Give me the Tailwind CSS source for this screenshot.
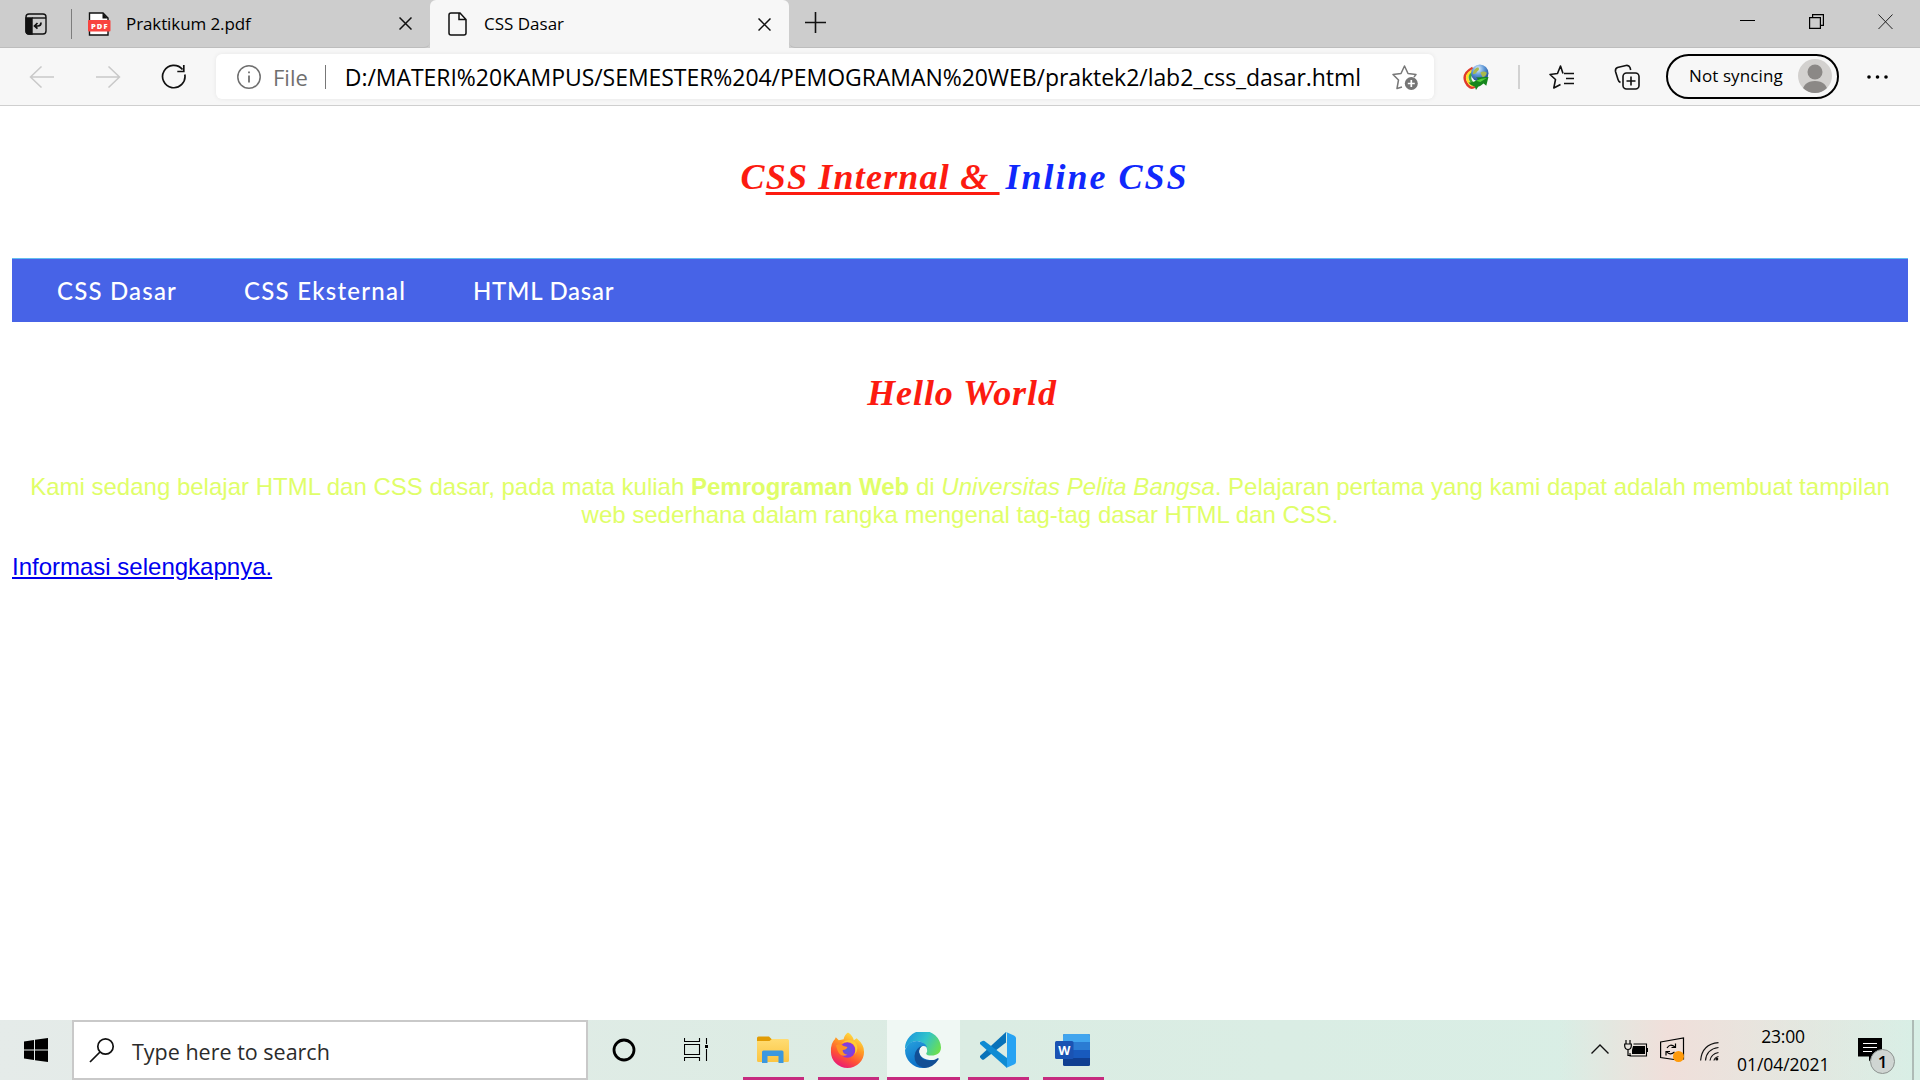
<!DOCTYPE html>
<html lang="id">
<head>
<meta charset="utf-8">
<title>CSS Dasar</title>
<script src="https://cdn.jsdelivr.net/npm/@tailwindcss/browser@4"></script>
</head>
<body class="flex h-[1080px] w-[1920px] flex-col overflow-hidden bg-white font-['Open_Sans',sans-serif] text-black">

<!-- Tab strip -->
<header class="flex h-12 shrink-0 bg-[#cdcdcd]">
  <div class="flex w-[430px] items-center rounded-br-md border-b border-[#bdbdbd]">
    <svg class="ml-[25px] size-[22px] shrink-0" viewBox="0 0 22 22" fill="none" stroke="#111" stroke-width="1.4">
      <rect x="1" y="1" width="20" height="20" rx="3"/>
      <path d="M1 5H7V21H4a3 3 0 0 1-3-3z" fill="#111"/><path d="M7 5H21"/>
      <path d="M16 9.500q0 3.500-3 3.500H9.500M12.500 10 9.500 13l3 2.700" stroke-width="1.7"/>
    </svg>
    <span class="ml-[24px] h-[30px] w-px bg-[#7d7d7d]"></span>
    <svg class="ml-[15px] h-6 w-6 shrink-0" viewBox="0 0 24 24">
      <path d="M2.500 1H16l5 5V23H2.500z" fill="#fff" stroke="#111" stroke-width="1.4"/>
      <path d="M15.500 1V6.500H21z" fill="#111"/>
      <rect x="1" y="8" width="22.500" height="11.500" rx="1" fill="#f8433f"/>
      <text x="12.200" y="16.600" font-family="Open Sans" font-size="7.500" font-weight="800" fill="#fff" text-anchor="middle" textLength="16.500">PDF</text>
    </svg>
    <span class="ml-[15px] text-[17px] tracking-[-0.1px]">Praktikum 2.pdf</span>
    <svg class="ml-auto mr-[18px] size-[13px]" viewBox="0 0 13 13" stroke="#111" stroke-width="1.5"><path d="M.5.5l12 12M12.500.5l-12 12"/></svg>
  </div>
  <div class="flex w-[359px] items-center rounded-t-md bg-[#f7f7f7]">
    <svg class="ml-[18px] h-6 w-[20px]" viewBox="0 0 20 24" fill="none" stroke="#111" stroke-width="1.5"><path d="M3 1H12L18 7.500V21a2 2 0 0 1-2 2H3a2 2 0 0 1-2-2V3a2 2 0 0 1 2-2zM11 1V7.500H18"/></svg>
    <span class="ml-[16px] text-[17px]">CSS Dasar</span>
    <svg class="ml-auto mr-[18px] size-[13px]" viewBox="0 0 13 13" stroke="#111" stroke-width="1.5"><path d="M.5.5l12 12M12.500.5l-12 12"/></svg>
  </div>
  <div class="flex flex-1 rounded-bl-md border-b border-[#bdbdbd]">
    <svg class="ml-[16px] mt-[12px] size-[21px]" viewBox="0 0 21 21" stroke="#111" stroke-width="1.6"><path d="M10.500 0V21M0 10.500H21"/></svg>
    <div class="ml-auto mr-[27px] flex gap-[53px] pt-[14px]">
      <svg class="h-4 w-[16px]" viewBox="0 0 16 16" stroke="#000"><path d="M0 6.500H15"/></svg>
      <svg class="h-4 w-[16px]" viewBox="0 0 16 16" fill="none" stroke="#000" stroke-width="1.200"><path d="M.6 3.600H11.400V14.400H.6zM3.600 3.600V.6H14.400V11.400H11.400"/></svg>
      <svg class="h-4 w-[15px]" viewBox="0 0 15 16" stroke="#222"><path d="M.5.5l14 14.500M14.500.5l-14 14.500"/></svg>
    </div>
  </div>
</header>

<!-- Toolbar -->
<div class="flex h-[58px] shrink-0 items-center border-b border-[#cfcfcf] bg-[#f7f7f7]">
  <svg class="ml-[29px] h-[22px] w-[25px]" viewBox="0 0 25 22" fill="none" stroke="#c9c9c9" stroke-width="1.5"><path d="M25 11H1.500M12.500.5 1.500 11l11 10.500"/></svg>
  <svg class="ml-[42px] h-[22px] w-[25px]" viewBox="0 0 25 22" fill="none" stroke="#c9c9c9" stroke-width="1.500"><path d="M0 11H23.500M12.500.5l11 10.500-11 10.500"/></svg>
  <svg class="ml-[40px] size-[26px]" viewBox="0 0 26 26" fill="none" stroke="#111" stroke-width="1.700"><path d="M23.800 10.500A11.200 11.200 0 1 1 21.500 5.500M22.800 1V7.500H16.300"/></svg>
  <div class="ml-[29px] flex h-[45px] w-[1218px] items-center rounded-md bg-white shadow-[0_0_5px_rgba(0,0,0,0.07)]">
    <svg class="ml-[21px] size-6" viewBox="0 0 24 24" fill="none" stroke="#6f6f6f" stroke-width="1.500"><circle cx="12" cy="12" r="11.200"/><path d="M12 10.500V17.500M12 6.500V8.300" stroke-width="1.800"/></svg>
    <span class="ml-[12px] pt-px text-[22px] text-[#6f6f6f]">File</span>
    <span class="ml-[17px] h-6 w-px bg-[#777]"></span>
    <span class="ml-[19px] pt-[2px] text-[23px] tracking-[-0.05px] whitespace-nowrap">D:/MATERI%20KAMPUS/SEMESTER%204/PEMOGRAMAN%20WEB/praktek2/lab2_css_dasar.html</span>
    <svg class="ml-auto mr-[16px] size-[26px]" viewBox="0 0 26 26" fill="none" stroke="#777" stroke-width="1.500"><path d="M10 23 5 24.500 6.500 16 1 10.500 9 9.500 12.500 2 16 9.500 24 10.500 22 13" stroke-linejoin="round"/><circle cx="19.300" cy="19.500" r="6.500" fill="#757575" stroke="none"/><path d="M19.300 16V23M15.800 19.500h7" stroke="#fff" stroke-width="1.700"/></svg>
  </div>
  <svg class="ml-[29px] size-[26px]" viewBox="0 0 24 24">
    <defs><radialGradient id="globe" cx=".4" cy=".25" r=".8"><stop offset="0" stop-color="#e4f2ff"/><stop offset=".45" stop-color="#5d98d8"/><stop offset="1" stop-color="#123a83"/></radialGradient></defs>
    <g fill="none" stroke-width="2.400"><path d="M9 3.500Q-1 9 2.500 16.500T11 21" stroke="#e03a2c"/><path d="M9 6Q2 10 4.500 15.500T11 19" stroke="#ffe02a"/><path d="M9.500 8Q5 11 7 15T12 17" stroke="#3fae3a"/></g>
    <circle cx="15.500" cy="8.500" r="8" fill="url(#globe)"/><path d="M9 9q1-5 5-6 2 2-1 4-1 3-4 2zM16 8q3-2 6 0-1 4-4 4z" fill="#a9b94c"/>
    <path d="M5 17Q10 17.500 14 14L12 12.500 23.500 12 21.500 20 19 18Q16 20.500 14 21L12 24 11 21Q7 20 5 17z" fill="#15861c"/><path d="M12 15.500 17 13.500 22 13l-6 3.500z" fill="#56cf3d"/>
  </svg>
  <span class="ml-[29px] h-6 w-[2px] bg-[#d2d2d2]"></span>
  <svg class="ml-[29px] h-[26px] w-[26px]" viewBox="0 0 26 26" fill="none" stroke="#111" stroke-width="1.600" stroke-linejoin="round"><path d="M14 9.500 11.500 2 8.500 9.500 1 10.500 6.500 15.500 4.800 24 11.500 20.500M15 9.500H25M17 14.500H25M15 19.500H25"/></svg>
  <svg class="ml-[39px] h-[26px] w-[26px]" viewBox="0 0 26 26" fill="none" stroke="#111" stroke-width="1.600"><rect x="9" y="9" width="16" height="16" rx="3.500"/><path d="M17 12.500V21.500M12.500 17h9M6.500 18.500Q4.500 17.500 4 15.500L1.500 7.500Q1 4.500 3.500 3.500L12 1.500Q15 1 16 3.500L16.700 6"/></svg>
  <div class="mb-px ml-[26px] flex h-[45px] w-[173px] items-center rounded-full border-2 border-black">
    <span class="ml-[21px] text-[17px] tracking-[0.1px] whitespace-nowrap">Not syncing</span>
    <svg class="mr-[5px] ml-auto size-[34px]" viewBox="0 0 34 34"><defs><clipPath id="face"><circle cx="17" cy="17" r="17"/></clipPath></defs><circle cx="17" cy="17" r="17" fill="#d3d1cf"/><g clip-path="url(#face)" fill="#8b8886"><circle cx="17" cy="13" r="7.500"/><path d="M4 34Q5 22 17 22T30 34z"/></g></svg>
  </div>
  <svg class="ml-[28px] h-1 w-[21px]" viewBox="0 0 21 4"><circle cx="2" cy="2" r="1.800"/><circle cx="10.500" cy="2" r="1.800"/><circle cx="19" cy="2" r="1.800"/></svg>
</div>

<!-- Page -->
<main class="flex-1 px-3 font-['Liberation_Sans',Arial,sans-serif] text-[24px] leading-7">
  <h1 class="mt-[51px] flex h-10 justify-center pl-[9px] font-['Brush_Script_MT','Liberation_Serif',serif] text-[36px] leading-10 font-bold italic whitespace-pre"><span class="w-[259px] tracking-[1.2px] text-[#fc1b10]">C<span class="underline decoration-[3px] underline-offset-[3px]">SS Internal &amp; </span></span><span class="ml-[6px] tracking-[2px] text-[#1028fc]">Inline CSS</span></h1>
  <nav class="mt-[61px] flex h-16 items-center border-t border-[#62bdf0] bg-[#4763e7] pt-px pl-[45px] font-['Comic_Sans_MS',Lato,sans-serif] text-[24px] font-medium text-white">
    <a class="w-[187px] tracking-[1.200px]">CSS Dasar</a>
    <a class="w-[229px] tracking-[1.250px]">CSS Eksternal</a>
    <a class="tracking-[0.750px]">HTML Dasar</a>
  </nav>
  <h1 class="mt-[51px] h-10 pl-[4px] text-center font-['Brush_Script_MT','Liberation_Serif',serif] text-[36px] leading-10 font-bold tracking-[0.900px] text-[#fc1b10] italic">Hello World</h1>
  <p class="mt-[60px] text-center text-[#e0fe69]">Kami sedang belajar HTML dan CSS dasar, pada mata kuliah <b>Pemrograman Web</b> di <i>Universitas Pelita Bangsa</i>. Pelajaran pertama yang kami dapat adalah membuat tampilan web sederhana dalam rangka mengenal tag-tag dasar HTML dan CSS.</p>
  <p class="mt-6"><a class="text-[#0000ee] underline">Informasi selengkapnya.</a></p>
</main>

<!-- Taskbar -->
<footer class="flex h-[60px] shrink-0 bg-linear-to-r from-[#e5ebe9] via-[#dbece3] to-[#d8efe6]">
  <svg class="mt-[18px] ml-6 size-6" viewBox="0 0 24 24"><path d="M0 3.500 10 2V11.400H0zM11 1.800 24 0V11.400H11zM0 12.400H10V22L0 20.600zM11 12.400H24V24L11 22.200z"/></svg>
  <div class="ml-6 flex w-[516px] border-2 border-[#c9c9c9] bg-white">
    <svg class="mt-[15px] ml-[15px] size-[26px]" viewBox="0 0 26 26" fill="none" stroke="#111" stroke-width="1.700"><circle cx="16.500" cy="9.500" r="7.700"/><path d="M11 15 1 25"/></svg>
    <span class="ml-[17px] pt-[2px] text-[21.5px] leading-[56px] text-[#2b2b2b]">Type here to search</span>
  </div>
  <svg class="mt-[18px] ml-[24px] size-6" viewBox="0 0 24 24" fill="none" stroke="#000" stroke-width="2.800"><circle cx="12" cy="12" r="10"/></svg>
  <svg class="mt-[18px] ml-[48px] h-[23px] w-6" viewBox="0 0 24 23" fill="none" stroke="#000" stroke-width="1.100"><path d="M.5 0V3.500H15.500V0M.5 6.500H15.500V16.500H.5zM.5 23V19.500H15.500V23M22.500 0V6M22.500 11V23"/><path d="M21 7h3v3h-3z" fill="#000" stroke="none"/></svg>

  <div class="ml-[35px] flex w-[61px] justify-center border-b-[3px] border-[#c62b7f] pt-4 pr-[2px]">
    <svg class="h-[29px] w-8" viewBox="0 0 32 29"><defs><linearGradient id="folder" x2="0" y2="1"><stop stop-color="#ffdc73"/><stop offset="1" stop-color="#fbc542"/></linearGradient></defs><path d="M0 2a1.500 1.500 0 0 1 1.500-1.500H12L15 3.500V9H0z" fill="#e19c05"/><path d="M0 5H12.500L15 3H30.500A1.500 1.500 0 0 1 32 4.500V24.500a1.500 1.500 0 0 1-1.500 1.500h-29A1.500 1.500 0 0 1 0 24.500z" fill="url(#folder)"/><path d="M5 27V16a1.500 1.500 0 0 1 1.500-1.500H25A1.500 1.500 0 0 1 26.500 16V27H21.500V20H10.500V27z" fill="#3b98df"/></svg>
  </div>
  <div class="ml-[14px] flex w-[61px] justify-center border-b-[3px] border-[#c62b7f] pt-3 pr-[2px]">
    <svg class="h-9 w-[35px]" viewBox="0 0 36 36"><defs><linearGradient id="fox" x1=".8" x2=".3" y2="1"><stop stop-color="#fff04a"/><stop offset=".4" stop-color="#ff9a25"/><stop offset=".7" stop-color="#ff5235"/><stop offset="1" stop-color="#e8157a"/></linearGradient><radialGradient id="orb"><stop stop-color="#5461dd"/><stop offset="1" stop-color="#9132de"/></radialGradient></defs><path d="M18.500 0q5 3 6 8l3-2q8 7 7.500 14A17 16.500 0 0 1 1 20Q.5 11 5 7l1-2 3 3 5-1q1-5 4.500-7z" fill="url(#fox)"/><circle cx="18" cy="18" r="8" fill="url(#orb)"/><path d="M12 11q7-3 12 1 4 5 1 11 6-7 1-13-7-5-14 1z" fill="#ffcb35"/><path d="M6 13q5-2 8 1l4 1q-1 3-5 3 0 4 5 5-7 3-10-4z" fill="#ff9226"/></svg>
  </div>
  <div class="ml-2 flex w-[73px] justify-center border-b-[3px] border-[#c62b7f] bg-[#f0f8f4] pt-3 pr-[2px]">
    <svg class="size-9" viewBox="0 0 36 36"><defs><linearGradient id="edgeTop" y1=".3" y2=".7"><stop stop-color="#1d98dc"/><stop offset=".5" stop-color="#31c3cb"/><stop offset="1" stop-color="#6de04c"/></linearGradient><linearGradient id="edgeLeft" x2=".6" y2="1"><stop stop-color="#27a2de"/><stop offset="1" stop-color="#0868c4"/></linearGradient></defs><path d="M0 17A18 17.500 0 0 1 36 15.500c0 6-5 8-9 8-5 0-7-1-5-3.500Q23 16 18 11 8 5 0 17z" fill="url(#edgeTop)"/><path d="M0 18Q3 9 12 9q8 1 10 6-7-3-8 4 1 10 16 9-5 8-12 8A18 18 0 0 1 0 18z" fill="url(#edgeLeft)"/><path d="M18 13.500q-4 2-4 7Q16 29 26 28.500q4-.5 7-2.500 1 0 .5 1.500Q28 36 19 36 9 33 9.500 24 10 16 18 13.500z" fill="#124f95"/></svg>
  </div>
  <div class="ml-2 flex w-[61px] justify-center border-b-[3px] border-[#c62b7f] pt-3 pr-[2px]">
    <svg class="size-9" viewBox="0 0 36 36"><path d="M0 24 26 0V10.500L4 27.500q-1 .5-2 0L.5 26Q-.5 25 0 24z" fill="#0872b9"/><path d="M0 12Q-.5 11 .5 10L2.500 9q1-.5 2 0L27 26V36z" fill="#0f8bd3"/><path d="M26 0 34 3.500Q36 4.500 36 6V30q0 1.500-2 2.500L26 36q1-1 1-2V2q0-1-1-2z" fill="#27a3f3"/></svg>
  </div>
  <div class="ml-[14px] flex w-[61px] justify-center border-b-[3px] border-[#c62b7f] pt-[14px] pr-[2px]">
    <svg class="h-8 w-[35px]" viewBox="0 0 35 32"><rect x="8" width="27" height="32" rx="1.500" fill="#103f91"/><path d="M8 16H35V24H8z" fill="#185abd"/><path d="M8 8H35V16H8z" fill="#2b7cd3"/><path d="M8 8V1.500Q8 0 9.500 0H33.500Q35 0 35 1.500V8z" fill="#41a5ee"/><rect y="7" width="18.500" height="18" rx="1.500" fill="#1a53b3"/><text x="9.200" y="20.500" font-family="Open Sans" font-size="12.500" font-weight="700" fill="#fff" text-anchor="middle">W</text></svg>
  </div>

  <div class="ml-auto flex bg-linear-to-r from-[#daede5]/0 via-[#f0dfda] via-30% to-[#d8efe6]/0">
    <svg class="mt-6 ml-[31px] h-[10px] w-[18px]" viewBox="0 0 18 10" fill="none" stroke="#111" stroke-width="1.400"><path d="M.5 9.500 9 1l8.500 8.500"/></svg>
    <svg class="mt-[20px] ml-[15px] h-[18px] w-6" viewBox="0 0 24 18"><path d="M2 0V4M6 0V4M.7 4H7.300V6Q7 9.500 4 9.500T.7 6zM4 9.500V15.500H7" fill="none" stroke="#000" stroke-width="1.200"/><path d="M9.500 4H22.500V16H6V13" fill="none" stroke="#000" stroke-width="1.100"/><path d="M9 6H21V14H8V10zM23 8h1v4h-1z"/></svg>
    <svg class="mt-[17px] ml-[12px] h-[26px] w-[25px]" viewBox="0 0 25 26" fill="none" stroke="#000" stroke-width="1.200"><path d="M.6 5 23.500 1V22L14 22.500.6 20.500zM7 11Q10 6 15 10M15.500 6.500V10.500H11.500M14.500 15Q10 19 6.500 14.500M6 18.500V14.500H10"/><circle cx="18.500" cy="19.500" r="5.500" fill="#ff9a0a" stroke="none"/></svg>
    <svg class="mt-[22px] ml-[15px] h-[19px] w-[19px]" viewBox="0 0 19 19" fill="none" stroke="#111" stroke-width="1.200"><path d="M.6 18.500Q2 2 18.500.6M5.500 18.500Q6.500 7 18.500 5.500M10 18.500Q11 12 18.500 10.500M14 18.500Q14.500 15.500 18.500 14.500"/><circle cx="16.800" cy="17" r="1.500" fill="#111" stroke="none"/></svg>
    <div class="ml-[18px] w-[92px] pt-[2px] text-center text-[17.5px] leading-7"><p class="tracking-[-0.2px]">23:00</p><p class="whitespace-nowrap tracking-[-0.050px]">01/04/2021</p></div>
    <div class="relative ml-[29px] w-6">
      <svg class="mt-[18px] h-6 w-6" viewBox="0 0 24 24"><path d="M0 0H24V18.500H15L11 23.500V18.500H0z"/><path d="M5 5.500H19M5 9.500H19M5 13.500H14" stroke="#fff" stroke-width="1.200"/></svg>
      <span class="absolute top-[29px] left-[12px] flex size-[25px] items-center justify-center rounded-full border border-[#8d9390] bg-[#cfd5d2] text-[17px] font-semibold">1</span>
    </div>
    <span class="ml-[30px] w-[2px] bg-[#aebbb6]"></span><span class="w-[6px]"></span>
  </div>
</footer>
</body>
</html>
